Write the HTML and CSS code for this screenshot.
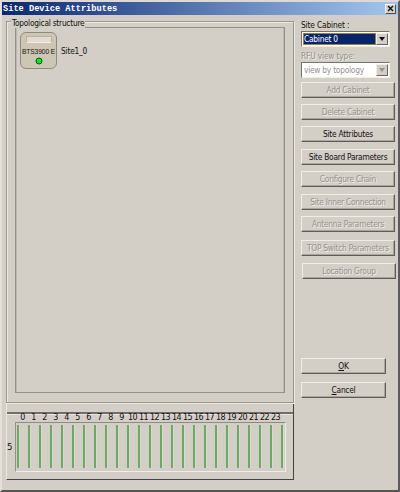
FILE: index.html
```html
<!DOCTYPE html>
<html lang="en">
<head>
<meta charset="utf-8">
<title>Site Device Attributes</title>
<link rel="stylesheet" href="styles.css">
</head>
<body>
<div class="window">
  <header class="titlebar">
    <span class="title">Site Device Attributes</span>
    <button class="close" aria-label="Close"><svg width="7" height="7" viewBox="0 0 7 7"><path d="M1 1L6 6M6 1L1 6" stroke="#111" stroke-width="1.4"/></svg></button>
  </header>
  <div class="content">
    <main class="left">
      <section class="group">
        <span class="legend">Topological structure</span>
        <div class="canvas">
          <div class="device">
            <div class="slot"></div>
            <div class="model">BTS3900 E</div>
            <svg class="led" width="8" height="8" viewBox="0 0 8 8"><circle cx="4" cy="4" r="3" fill="#00f018" stroke="#145014" stroke-width="1"/></svg>
          </div>
          <span class="site">Site1_0</span>
        </div>
      </section>
      <section class="rack">
        <div class="rack-top"></div>
        <div class="numbers"><span>0</span><span>1</span><span>2</span><span>3</span><span>4</span><span>5</span><span>6</span><span>7</span><span>8</span><span>9</span><span>10</span><span>11</span><span>12</span><span>13</span><span>14</span><span>15</span><span>16</span><span>17</span><span>18</span><span>19</span><span>20</span><span>21</span><span>22</span><span>23</span></div>
        <div class="rack-row">
          <span class="row-no">5</span>
          <div class="slots"><i></i><i></i><i></i><i></i><i></i><i></i><i></i><i></i><i></i><i></i><i></i><i></i><i></i><i></i><i></i><i></i><i></i><i></i><i></i><i></i><i></i><i></i><i></i><i></i><i></i></div>
        </div>
      </section>
    </main>
    <aside class="side">
      <span class="label">Site Cabinet :</span>
      <div class="select active"><span class="value">Cabinet 0</span><span class="arrow"><svg width="6" height="4" viewBox="0 0 6 4"><path d="M0 0H6L3 4Z"/></svg></span></div>
      <span class="label off second">RFU view type:</span>
      <div class="select off"><span class="value">view by topology</span><span class="arrow"><svg width="6" height="4" viewBox="0 0 6 4"><path d="M0 0H6L3 4Z"/></svg></span></div>
      <div class="buttons">
        <button class="btn off">Add Cabinet</button>
        <button class="btn off">Delete Cabinet</button>
        <button class="btn">Site Attributes</button>
        <button class="btn spaced">Site Board Parameters</button>
        <button class="btn off">Configure Chain</button>
        <button class="btn off spaced">Site Inner Connection</button>
        <button class="btn off">Antenna Parameters</button>
        <button class="btn off wide-gap">TOP Switch Parameters</button>
        <button class="btn off spaced last">Location Group</button>
      </div>
      <div class="actions">
        <button class="btn"><u>O</u>K</button>
        <button class="btn"><u>C</u>ancel</button>
      </div>
    </aside>
  </div>
</div>
</body>
</html>
```
FILE: styles.css
```css
* { box-sizing: border-box; }
body {
  margin: 0;
  background: #d3cec6;
  color: #111;
  font: 8.3px/10px "DejaVu Sans Condensed", "Noto Sans", sans-serif;
  letter-spacing: -0.24px;
}
button { font: inherit; letter-spacing: inherit; color: inherit; padding: 0; margin: 0; }
svg { display: block; }
.window {
  width: 400px;
  height: 492px;
  border: 2px solid;
  border-color: #dedad3 #5c5c5c #55555a #e4e0d8;
}
.titlebar {
  height: 13px;
  display: flex;
  align-items: center;
  justify-content: space-between;
  padding: 0 2px 0 1px;
  background: linear-gradient(90deg, #0b2871, #a4c7ee);
}
.title {
  color: #fff;
  font: bold 8.67px/12px "Liberation Mono", monospace;
  letter-spacing: 0;
  padding-top: 1px;
}
.close {
  width: 11px;
  height: 10px;
  display: grid;
  place-items: center;
  background: #d6d2ca;
  border: 1px solid;
  border-color: #f4f2ee #505050 #505050 #f4f2ee;
}
.content { display: flex; gap: 7px; padding: 6px 0 0 4px; }
.left { width: 288px; }
.group {
  height: 382px;
  padding: 5px 8px 9px;
  border: 1px solid #9a9791;
  box-shadow: inset 1px 1px #ebe8e2, 1px 1px #ebe8e2;
  position: relative;
}
.legend {
  position: absolute;
  left: 4px;
  top: -4px;
  padding: 0 1px;
  background: #d3cec6;
  white-space: nowrap;
}
.canvas {
  height: 100%;
  width: 270px;
  display: flex;
  align-items: flex-start;
  padding: 4px;
  border: 1px solid #94918b;
  box-shadow: inset 1px 0 #bcb8b1, inset -1px 0 #bcb8b1;
}
.device {
  width: 37px;
  height: 37px;
  display: flex;
  flex-direction: column;
  align-items: center;
  padding-top: 3px;
  border: 1px solid #8e8b7d;
  border-radius: 6px;
  background: #cdc6b4;
}
.slot { width: 26px; height: 7px; background: #e2dbd0; border: 1px solid #b9b2a2; border-bottom-color: #f2eee4; }
.model {
  height: 8px;
  margin-top: 5px;
  white-space: nowrap;
  font: 6.7px/8px "Liberation Sans", sans-serif;
  letter-spacing: -0.12px;
}
.led { margin-top: 1px; }
.site { margin: 14px 0 0 4px; letter-spacing: -0.2px; }
.rack {
  height: 77px;
  border: 1px solid;
  border-color: #ebe8e2 #444 #444 #ebe8e2;
}
.rack-top { height: 10px; border-bottom: 2px solid #706d69; box-shadow: 0 1px #ece4df; }
.numbers {
  height: 8px;
  display: grid;
  grid-template-columns: repeat(24, 11px);
  margin-left: 10px;
  font: 8px/8px "DejaVu Sans", sans-serif;
  letter-spacing: -0.6px;
  text-align: center;
}
.rack-row { display: flex; align-items: center; height: 50px; }
.row-no { width: 8px; font: 8.5px/8px "DejaVu Sans", sans-serif; }
.slots {
  width: 271px;
  height: 50px;
  display: flex;
  gap: 9px;
  padding: 2px 0 3px 1px;
  border: 1px solid;
  border-color: #8e8b86 #eeece7 #eeece7 #94918b;
}
.slots i { flex: none; width: 2px; background: #67ad61; box-shadow: 1px 0 #e2d5d0; }
.side { width: 94px; }
.label { display: block; height: 10px; margin-top: -1px; letter-spacing: -0.15px; }
.off { color: #96938c; }
.label.off { text-shadow: 1px 1px #efede8; }
.select {
  width: 89px;
  height: 16px;
  margin-top: 1px;
  display: flex;
  background: #fff;
  border: 1px solid;
  border-color: #75726d #f1eee8 #f1eee8 #75726d;
  padding: 1px;
}
.select .value { flex: 1; padding: 1px 0 0; white-space: nowrap; }
.select.active .value { background: #0a246a; color: #fff; border: 1px solid #9e7e43; padding: 0; }
.select.off .value { padding-left: 1px; }
.arrow {
  width: 12px;
  display: grid;
  place-items: center;
  background: #d3cec6;
  border: 1px solid;
  border-color: #f1eee8 #65625e #65625e #f1eee8;
}
.arrow svg { fill: currentColor; }
.label.second { margin-top: 4px; }
.buttons { display: flex; flex-direction: column; gap: 6px; margin-top: 4px; }
.btn {
  width: 94px;
  height: 16px;
  background: #d3cec6;
  border: 1px solid;
  border-color: #efede8 #5e5b58 #5e5b58 #efede8;
  box-shadow: inset -1px -1px #aaa69f;
  white-space: nowrap;
  line-height: 12px;
}
.btn.spaced { margin-top: 1px; }
.btn.wide-gap { margin-top: 2px; }
.btn.last { margin-left: 1px; }
.btn.off { text-shadow: 1px 1px #efede8; }
.actions { display: flex; flex-direction: column; gap: 8px; margin-top: 79px; }
.actions .btn { width: 85px; }
```
